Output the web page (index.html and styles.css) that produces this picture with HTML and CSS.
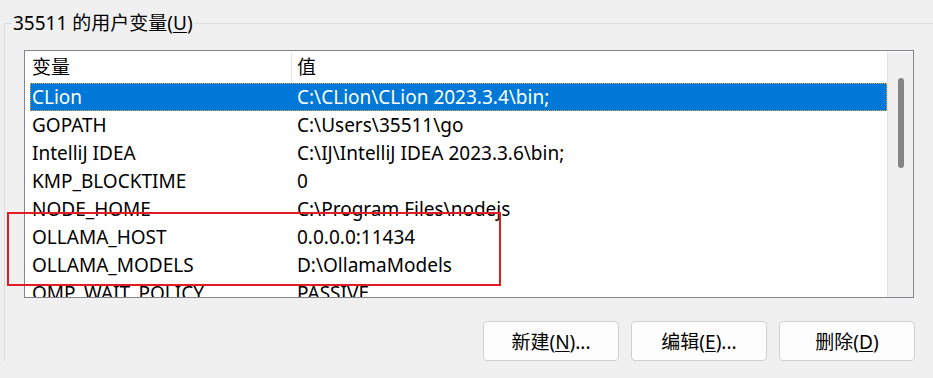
FILE: index.html
```html
<!DOCTYPE html>
<html lang="zh-CN">
<head>
<meta charset="utf-8">
<title>用户变量</title>
<link rel="stylesheet" href="styles.css">
</head>
<body>
<fieldset class="group">
  <legend class="group-title">35511 的用户变量(<u>U</u>)</legend>
  <div class="group-body">
    <div class="listbox">
      <div class="list">
        <div class="row header"><div class="cell c1">变量</div><div class="cell c2">值</div></div>
        <div class="row selected"><div class="cell c1">CLion</div><div class="cell c2">C:\CLion\CLion 2023.3.4\bin;</div></div>
        <div class="row"><div class="cell c1">GOPATH</div><div class="cell c2">C:\Users\35511\go</div></div>
        <div class="row"><div class="cell c1">IntelliJ IDEA</div><div class="cell c2">C:\IJ\IntelliJ IDEA 2023.3.6\bin;</div></div>
        <div class="row"><div class="cell c1">KMP_BLOCKTIME</div><div class="cell c2">0</div></div>
        <div class="row"><div class="cell c1">NODE_HOME</div><div class="cell c2">C:\Program Files\nodejs</div></div>
        <div class="row"><div class="cell c1">OLLAMA_HOST</div><div class="cell c2">0.0.0.0:11434</div></div>
        <div class="row"><div class="cell c1">OLLAMA_MODELS</div><div class="cell c2">D:\OllamaModels</div></div>
        <div class="row"><div class="cell c1">OMP_WAIT_POLICY</div><div class="cell c2">PASSIVE</div></div>
      </div>
      <div class="scrollbar"><div class="thumb"></div></div>
    </div>
    <div class="buttons">
      <button class="btn">新建(<u>N</u>)...</button>
      <button class="btn">编辑(<u>E</u>)...</button>
      <button class="btn">删除(<u>D</u>)</button>
    </div>
  </div>
</fieldset>
<div class="highlight"></div>
</body>
</html>
```

FILE: styles.css
```css
html, body {
  margin: 0;
  padding: 0;
  background: #f0f0f0;
}
body {
  width: 933px;
  height: 378px;
  overflow: hidden;
  position: relative;
  font-family: "Noto Sans", "Noto Sans CJK SC", sans-serif;
  font-size: 19px;
  color: #000;
}
u {
  text-decoration-thickness: 1px;
  text-underline-offset: 2px;
}
.group {
  margin: 8px 0 0 4px;
  padding: 0;
  border: 1px solid #dcdcdc;
  border-right: none;
  border-bottom: none;
  width: 929px;
  box-sizing: border-box;
  min-width: 0;
}
.group-title {
  margin-left: 7px;
  padding: 0 2px 0 1px;
  line-height: 30px;
  height: 30px;
}
.group-body {
  padding: 12px 0 0 19px;
}
.listbox {
  width: 890px;
  height: 248px;
  box-sizing: border-box;
  border: 1px solid #82858c;
  background: #fff;
  display: flex;
  padding: 1px 0 0 5px;
  overflow: hidden;
}
.list {
  flex: 1;
  display: flex;
  flex-direction: column;
  overflow: hidden;
  border-right: 1px solid #e3e3e3;
}
.row {
  display: grid;
  grid-template-columns: 262px 1fr;
  height: 28px;
  line-height: 28px;
  flex: none;
  white-space: nowrap;
}
.row.header {
  height: 31px;
  line-height: 31px;
}
.row.header .c1 {
  border-right: 1px solid #e5e5e5;
  margin: 1px 0 2px;
  line-height: 28px;
}
.cell.c1 { padding-left: 2px; }
.cell.c2 { padding-left: 5px; }
.row.selected {
  background: #0078d7;
  color: #fff;
  outline: 1px dotted #f0a040;
  outline-offset: -1px;
}
.scrollbar {
  width: 25px;
  background: #f0f0f0;
  display: flex;
  justify-content: center;
  padding-top: 26px;
  box-sizing: border-box;
}
.thumb {
  width: 6px;
  height: 90px;
  background: #858585;
  border-radius: 3px;
}
.buttons {
  width: 891px;
  display: flex;
  justify-content: flex-end;
  gap: 12px;
  margin-top: 23px;
}
.btn {
  width: 136px;
  height: 40px;
  background: #fdfdfd;
  border: 1px solid #d0d0d0;
  border-radius: 4px;
  font: inherit;
  color: #000;
  padding: 0;
}
.highlight {
  position: absolute;
  left: 7px;
  top: 212px;
  width: 494px;
  height: 74px;
  border: 2px solid #e31b23;
  box-sizing: border-box;
}
```
